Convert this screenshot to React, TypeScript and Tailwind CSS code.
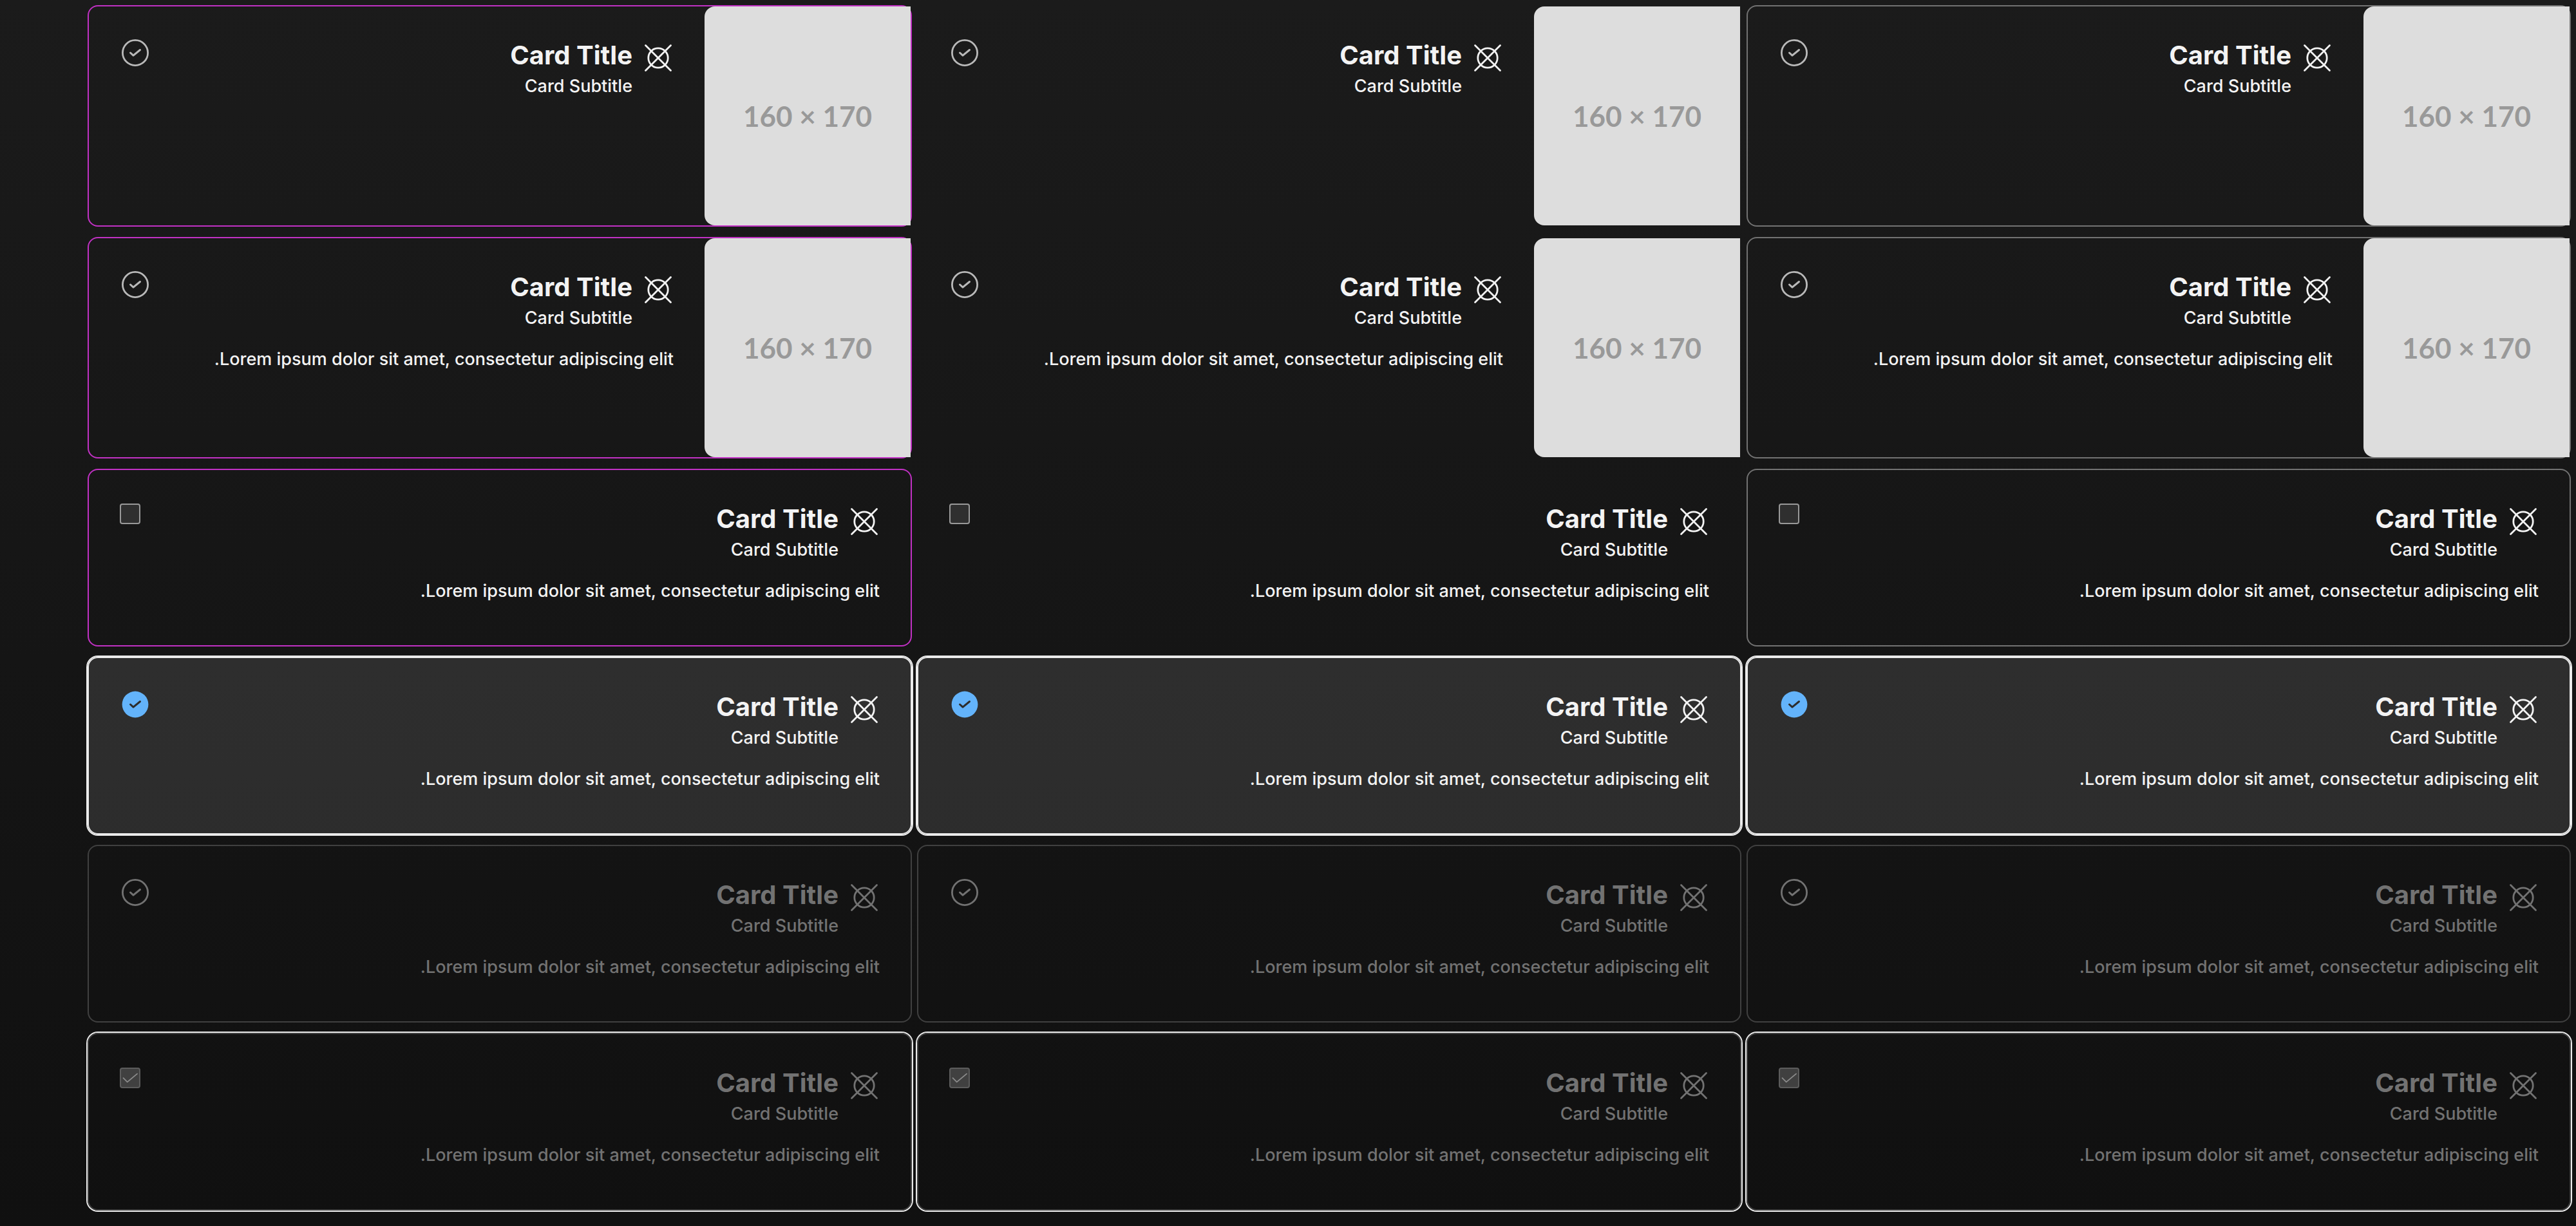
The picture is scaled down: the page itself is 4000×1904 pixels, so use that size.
import React from "react";

type Border = "gray" | "none" | "magenta";
type RowKind = {
  image?: boolean;
  body?: boolean;
  control: "check" | "box";
  selected?: boolean;
  disabled?: boolean;
};

const columns: Border[] = ["gray", "none", "magenta"];

const rows: RowKind[] = [
  { image: true, control: "check" },
  { image: true, body: true, control: "check" },
  { body: true, control: "box" },
  { body: true, control: "check", selected: true },
  { body: true, control: "check", disabled: true },
  { body: true, control: "box", selected: true, disabled: true },
];

const borderClass: Record<Border, string> = {
  gray: "border-[#727272]",
  none: "border-transparent",
  magenta: "border-[#c131c4]",
};

function frameClass(row: RowKind, border: Border) {
  if (row.selected && row.disabled) return "border-[#404040] ring-2 ring-[#ebebeb]";
  if (row.selected) return "border-[#ebebeb] bg-white/11 ring-2 ring-[#ebebeb]";
  if (row.disabled) return "border-[#404040]";
  return borderClass[border];
}

function CrossedCircle() {
  return (
    <svg viewBox="0 0 48 48" className="mt-2 size-12 shrink-0" fill="none" stroke="currentColor" strokeWidth="2.8" strokeLinecap="round" aria-hidden="true">
      <circle cx="24" cy="24" r="15.2" />
      <path d="M4.5 4.5 43.5 43.5M43.5 4.5 4.5 43.5" />
    </svg>
  );
}

function CircleCheck({ selected, disabled, label }: { selected?: boolean; disabled?: boolean; label: string }) {
  return (
    <button
      type="button"
      aria-label={label}
      aria-pressed={!!selected}
      disabled={disabled}
      className={"block size-12 shrink-0 " + (disabled ? "text-[#727272]" : selected ? "text-[#63b3fa]" : "text-[#b9b9b9]")}
    >
      <svg viewBox="0 0 48 48" className="size-12" fill="none" strokeLinecap="round" strokeLinejoin="round">
        {selected ? (
          <circle cx="24" cy="24" r="20.4" fill="currentColor" />
        ) : (
          <circle cx="24" cy="24" r="19.6" stroke="currentColor" strokeWidth="2.8" />
        )}
        <path d="M16.5 24 21 28.2 31.5 19.5" stroke={selected ? "#2d2d2d" : "currentColor"} strokeWidth="3" />
      </svg>
    </button>
  );
}

function BoxCheck({ selected, disabled, label }: { selected?: boolean; disabled?: boolean; label: string }) {
  return (
    <span className="relative m-1 block size-8 shrink-0 self-start ml-0">
      <input
        type="checkbox"
        aria-label={label}
        defaultChecked={selected}
        disabled={disabled}
        className={
          "block size-8 appearance-none rounded-sm border-2 " +
          (disabled ? "border-[#5c5c5c] bg-[#404040]" : "border-[#999999] bg-[#2f2f2f]")
        }
      />
      {selected && (
        <svg viewBox="0 0 32 32" className="pointer-events-none absolute inset-0 size-8" fill="none" stroke="#8c8c8c" strokeWidth="1.8" strokeLinecap="round" strokeLinejoin="round" aria-hidden="true">
          <path d="M5.5 16.2 11.7 22.4 27 9.6" />
        </svg>
      )}
    </span>
  );
}

function Card({ row, border, id }: { row: RowKind; border: Border; id: string }) {
  return (
    <article
      className={
        "flex rounded-2xl border-2 " +
        frameClass(row, border) +
        (row.disabled ? " text-[#727272]" : " text-[#f3f3f3]")
      }
    >
      {row.image && (
        <div
          role="img"
          aria-label="160 × 170"
          dir="ltr"
          className="flex h-[340px] w-80 shrink-0 items-center justify-center rounded-l-2xl bg-[#dddddd] font-['Lato',sans-serif] text-[44px] font-bold text-[#999999]"
        >
          160 × 170
        </div>
      )}
      <div className="flex min-h-[272px] min-w-0 grow items-start justify-between p-12">
        <div className="min-w-0">
          <div className="flex gap-4">
            <CrossedCircle />
            <div>
              <h3 className="text-[40px] leading-[56px] font-bold">Card Title</h3>
              <p className="text-[27px] leading-10 font-medium">Card Subtitle</p>
            </div>
          </div>
          {row.body && (
            <p className="mt-6 text-[27px] leading-10 font-medium">
              Lorem ipsum dolor sit amet, consectetur adipiscing elit.
            </p>
          )}
        </div>
        {row.control === "check" ? (
          <CircleCheck selected={row.selected} disabled={row.disabled} label={"Select card " + id} />
        ) : (
          <BoxCheck selected={row.selected} disabled={row.disabled} label={"Select card " + id} />
        )}
      </div>
    </article>
  );
}

export default function App() {
  return (
    <main
      dir="rtl"
      className="min-h-screen bg-linear-to-b from-[#1b1b1b] to-[#101010] pt-2 pr-2 pb-6 pl-[136px] font-['Inter',sans-serif]"
    >
      <div className="grid grid-cols-3 gap-x-2 gap-y-4">
        {rows.map((row, r) =>
          columns.map((border, c) => (
            <Card key={r + "-" + c} row={row} border={border} id={r + 1 + "." + (c + 1)} />
          )),
        )}
      </div>
    </main>
  );
}
